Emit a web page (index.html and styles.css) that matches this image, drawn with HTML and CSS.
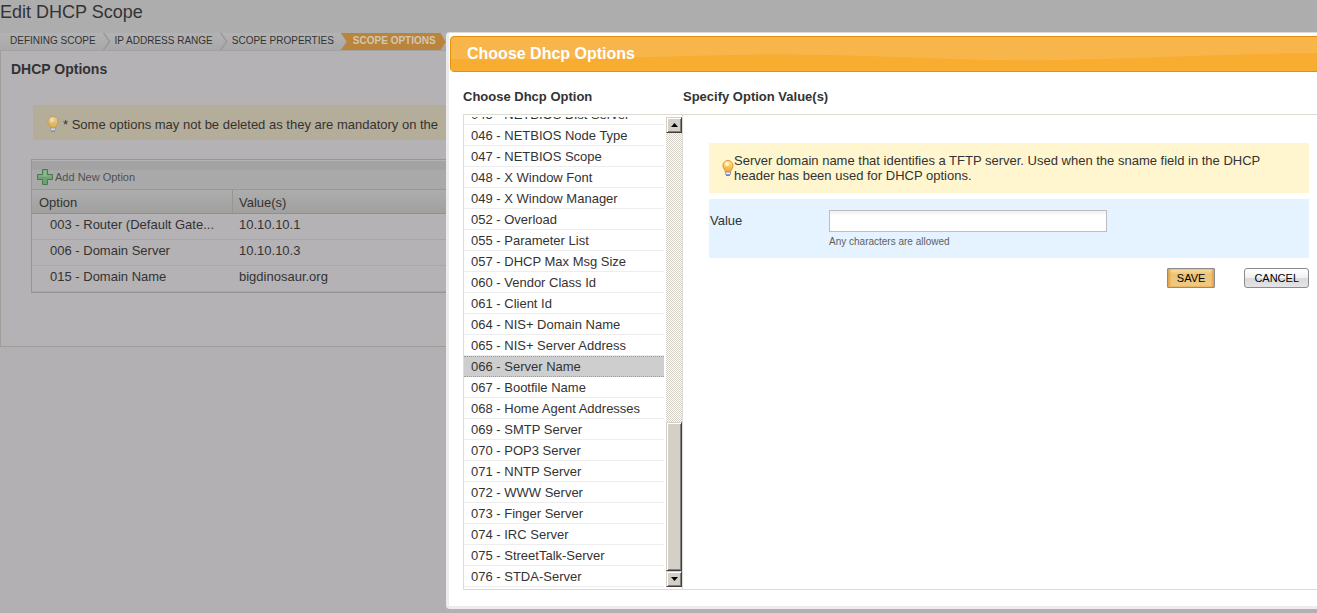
FILE: index.html
```
<!DOCTYPE html>
<html lang="en">
<head>
  <meta charset="UTF-8">
  <title>Edit DHCP Scope</title>
  <meta name="viewport" content="width=device-width, initial-scale=1.0">
  <link rel="stylesheet" href="styles.css">
</head>
<body>

  <svg class="sprites" aria-hidden="true">
    <defs>
      <linearGradient id="glass" x1="0" y1="0" x2="0" y2="1">
        <stop offset="0" stop-color="#ffe9a0"/>
        <stop offset="1" stop-color="#f5a623"/>
      </linearGradient>
      <symbol id="bulb" viewBox="0 0 12 16">
        <path d="M6 .5a5 5 0 0 0-5 5.2c0 2.700 2 3.600 2.500 6.300h5C9 9.300 11 8.400 11 5.700A5 5 0 0 0 6 .5z" fill="url(#glass)" stroke="#d9932b"/>
        <ellipse cx="5" cy="4" rx="2" ry="2.200" fill="#fff4c8"/>
        <path d="M3.500 12h5v2L7.500 15.500h-3L3.500 14z" fill="#e8ebf5" stroke="#8a8fa8" stroke-width=".8"/>
        <path d="M4 15h4" stroke="#4a55a0"/>
      </symbol>
    </defs>
  </svg>

  <main class="page">
    <h1>Edit DHCP Scope</h1>

    <ol class="steps">
      <li>Defining Scope</li>
      <li>IP Address Range</li>
      <li>Scope Properties</li>
      <li class="current">Scope Options</li>
    </ol>

    <section class="panel">
      <h2>DHCP Options</h2>
      <p class="hint">
        <svg class="bulb"><use href="#bulb"/></svg>
        <span>* Some options may not be deleted as they are mandatory on the</span>
      </p>

      <div class="grid">
        <div class="toolbar">
          <button type="button" class="add">
            <svg viewBox="0 0 16 16"><path d="M5.500.5h5v5h5v5h-5v5h-5v-5h-5v-5h5z" fill="#6fa173" stroke="#4b7a50"/><path d="M6.500 1.500h3v5h5v1h-13v-1h5z" fill="#8fb892"/></svg>
            Add New Option
          </button>
        </div>
        <table>
          <thead>
            <tr><th class="col-option">Option</th><th>Value(s)</th></tr>
          </thead>
          <tbody>
            <tr><td>003 - Router (Default Gate...</td><td>10.10.10.1</td></tr>
            <tr><td>006 - Domain Server</td><td>10.10.10.3</td></tr>
            <tr><td>015 - Domain Name</td><td>bigdinosaur.org</td></tr>
          </tbody>
        </table>
      </div>
    </section>
  </main>

  <div class="dialog" role="dialog" aria-labelledby="dialog-title">
    <header class="dialog-head">
      <svg class="wave" viewBox="0 0 867 34" preserveAspectRatio="none" aria-hidden="true"><path d="M0 22C80 24 160 21 280 18S500 25 607 23S760 17 867 16V34H0z" fill="#f8ac30"/></svg>
      <h2 id="dialog-title">Choose Dhcp Options</h2>
    </header>

    <div class="dialog-body">
      <section class="choose">
        <h3>Choose Dhcp Option</h3>
        <div class="listbox">
          <ul class="options">
            <li>045 - NETBIOS Dist Server</li>
            <li>046 - NETBIOS Node Type</li>
            <li>047 - NETBIOS Scope</li>
            <li>048 - X Window Font</li>
            <li>049 - X Window Manager</li>
            <li>052 - Overload</li>
            <li>055 - Parameter List</li>
            <li>057 - DHCP Max Msg Size</li>
            <li>060 - Vendor Class Id</li>
            <li>061 - Client Id</li>
            <li>064 - NIS+ Domain Name</li>
            <li>065 - NIS+ Server Address</li>
            <li class="selected">066 - Server Name</li>
            <li>067 - Bootfile Name</li>
            <li>068 - Home Agent Addresses</li>
            <li>069 - SMTP Server</li>
            <li>070 - POP3 Server</li>
            <li>071 - NNTP Server</li>
            <li>072 - WWW Server</li>
            <li>073 - Finger Server</li>
            <li>074 - IRC Server</li>
            <li>075 - StreetTalk-Server</li>
            <li>076 - STDA-Server</li>
          </ul>
          <div class="scrollbar">
            <button type="button" class="arrow" aria-label="Scroll up"><svg viewBox="0 0 7 4"><path d="M0 4L3.500 0L7 4z"/></svg></button>
            <div class="track"><div class="thumb"></div></div>
            <button type="button" class="arrow" aria-label="Scroll down"><svg viewBox="0 0 7 4"><path d="M0 0h7L3.500 4z"/></svg></button>
          </div>
        </div>
      </section>

      <section class="specify">
        <h3>Specify Option Value(s)</h3>
        <form class="values">
          <p class="hint">
            <svg class="bulb"><use href="#bulb"/></svg>
            <span>Server domain name that identifies a TFTP server. Used when the sname field in the DHCP header has been used for DHCP options.</span>
          </p>
          <div class="field">
            <label for="value">Value</label>
            <div class="control">
              <input type="text" id="value">
              <small>Any characters are allowed</small>
            </div>
          </div>
          <div class="actions">
            <button type="button" class="btn save">SAVE</button>
            <button type="button" class="btn">CANCEL</button>
          </div>
        </form>
      </section>
    </div>
  </div>

</body>
</html>
```
FILE: styles.css
```
* {
  box-sizing: border-box;
}

body {
  margin: 0;
  min-height: 100vh;
  position: relative;
  overflow: hidden;
  background: #b2b0b2;
  color: #333;
  font-family: "Liberation Sans", Arial, sans-serif;
  font-size: 13px;
  line-height: 15px;
}

h1, h2, h3, p, ul, ol {
  margin: 0;
  padding: 0;
}

ul, ol {
  list-style: none;
}

button, input {
  font-family: inherit;
}

.sprites {
  position: absolute;
  width: 0;
  height: 0;
}

.bulb {
  flex: none;
  width: 12px;
  height: 16px;
}

/* page behind the dialog */

h1 {
  height: 33px;
  padding-top: 1px;
  background: #adadad;
  font-size: 18px;
  font-weight: normal;
  line-height: 22px;
}

.steps {
  display: flex;
  height: 18px;
  padding-left: 6px;
  background: linear-gradient(#b3b2b4, #a8a8a8);
  box-shadow: inset 0 -1px #a2a2a2;
  font-size: 10px;
  line-height: 16px;
  text-transform: uppercase;
}

.steps li {
  display: flex;
  padding-left: 4px;
}

.steps li::after {
  content: "";
  width: 8px;
  height: 17px;
  margin-left: 7px;
  background: #9a9a9c;
  clip-path: polygon(0 0, 2px 0, 8px 50%, 2px 100%, 0 100%, 6px 50%);
}

.steps .current {
  margin-left: -8px;
  padding: 0 10px 0 12px;
  background: #b9853c;
  color: #d2c6b4;
  font-weight: bold;
  clip-path: polygon(0 0, calc(100% - 5px) 0, 100% 50%, calc(100% - 5px) 17px, 0 17px, 6px 50%);
}

.steps .current::after {
  display: none;
}

.panel {
  height: 296px;
  padding: 10px 0 0 10px;
  border: 1px solid #a09e98;
  border-top: 0;
  background: #b4b2b5;
}

.panel h2 {
  font-size: 14px;
  line-height: 16px;
}

.hint {
  display: flex;
  align-items: center;
}

.panel .hint {
  height: 35px;
  margin: 28px 0 19px 22px;
  padding: 3px 0 0 14px;
  gap: 4px;
  background: #b3ad99;
  white-space: nowrap;
}

.panel .bulb {
  opacity: .65;
}

.grid {
  margin-left: 20px;
  border: 1px solid #969696;
}

.toolbar {
  height: 30px;
  padding: 8px 0 0 5px;
  border-top: 1px solid #b4b2b5;
  border-bottom: 1px solid #999;
  background: linear-gradient(#a2a3a2 9px, #aaa9aa 9px);
}

.add {
  display: flex;
  align-items: center;
  gap: 2px;
  padding: 0;
  border: 0;
  background: none;
  color: #505050;
  font-size: 11px;
}

.add svg {
  width: 16px;
  height: 16px;
}

table {
  width: 100%;
  border-spacing: 0;
  table-layout: fixed;
}

th {
  height: 24px;
  padding: 1px 6px 0;
  border-right: 1px solid #969696;
  border-bottom: 1px solid #8f8f8f;
  background: linear-gradient(#adadad, #a0a09f);
  font-weight: normal;
  text-align: left;
}

.col-option {
  width: 201px;
  padding-left: 7px;
}

td {
  height: 26px;
  padding: 0 6px 5px;
  border-bottom: 1px solid #a8a6a8;
  white-space: nowrap;
}

td:first-child {
  padding-left: 18px;
}

/* dialog */

.dialog {
  position: absolute;
  top: 32px;
  left: 446px;
  right: -8px;
  padding-bottom: 16px;
  border: 3px solid #ececec;
  border-top: 1px solid #dcdcdc;
  border-radius: 4px;
  background: #fff;
}

.dialog-head {
  position: relative;
  height: 36px;
  margin: 3px 0 0 1px;
  border: 1px solid #e08f10;
  border-radius: 4px;
  background: #f7b54a;
}

.wave {
  position: absolute;
  width: 100%;
  height: 100%;
}

.dialog-head h2 {
  position: relative;
  padding-left: 16px;
  color: #fff;
  font-size: 16px;
  line-height: 34px;
}

.dialog-body {
  display: flex;
  padding: 17px 0 0 14px;
}

h3 {
  height: 25px;
  font-size: 13px;
}

.choose {
  flex: none;
  width: 220px;
}

.listbox {
  display: flex;
  justify-content: space-between;
  height: 476px;
  padding: 2px 0;
  border: 1px solid #dcdcd4;
}

/* scrolled to the end, so the overflow is cut at the top */
.options {
  display: flex;
  flex-direction: column;
  justify-content: flex-end;
  width: 200px;
  overflow: hidden;
}

.options li {
  flex: none;
  height: 21px;
  padding-left: 7px;
  border-bottom: 1px solid #ededed;
  line-height: 22px;
  white-space: nowrap;
}

.options .selected {
  border-top: 1px dotted #999;
  border-bottom: 1px dotted #999;
  background: #cecece;
  line-height: 20px;
}

.scrollbar {
  display: flex;
  flex-direction: column;
  width: 16px;
}

.arrow, .thumb {
  border: 1px solid;
  border-color: #d4d0c8 #404040 #404040 #d4d0c8;
  background: #d4d0c8;
  box-shadow: inset 1px 1px #fff, inset -1px -1px #808080;
}

.arrow {
  display: flex;
  align-items: center;
  justify-content: center;
  height: 16px;
  padding: 0;
}

.arrow svg {
  width: 7px;
  height: 4px;
}

.track {
  display: flex;
  flex: 1;
  flex-direction: column;
  justify-content: flex-end;
  background: repeating-conic-gradient(#d4d0c8 0 25%, #fff 0 50%) 0 0 / 2px 2px;
}

.thumb {
  height: 149px;
}

.specify {
  flex: 1;
}

.values {
  height: 476px;
  padding: 28px 13px 0 26px;
  border-top: 1px solid #dcdcd4;
  border-bottom: 1px solid #dcdcd4;
}

.values .hint {
  min-height: 50px;
  padding: 0 20px 0 13px;
  background: #fff6cf;
}

.field {
  display: flex;
  height: 59px;
  margin-top: 6px;
  padding: 11px 0 0 1px;
  background: #e5f2ff;
}

.field label {
  width: 119px;
  padding-top: 3px;
}

.control {
  display: flex;
  flex-direction: column;
}

.control input {
  width: 278px;
  height: 22px;
  border: 1px solid #bdbdbd;
  background: linear-gradient(#f0f0f0, #fff 5px);
}

.control small {
  margin-top: 2px;
  color: #5f5f5f;
  font-size: 10px;
}

.actions {
  display: flex;
  justify-content: flex-end;
  gap: 29px;
  margin-top: 10px;
}

.btn {
  height: 20px;
  padding: 0 9px;
  border: 1px solid #8c8c90;
  border-radius: 3px;
  background: linear-gradient(#fff, #f0f0f2 50%, #dadadd 50%, #e4e4e6);
  color: #000;
  font-size: 11px;
}

.save {
  border-radius: 1px;
  background: linear-gradient(#fbe3ad, #edc274 30%, #f0ca88);
  box-shadow: inset 2px 0 2px #e0a548, inset -2px 0 2px #e0a548;
}
```
